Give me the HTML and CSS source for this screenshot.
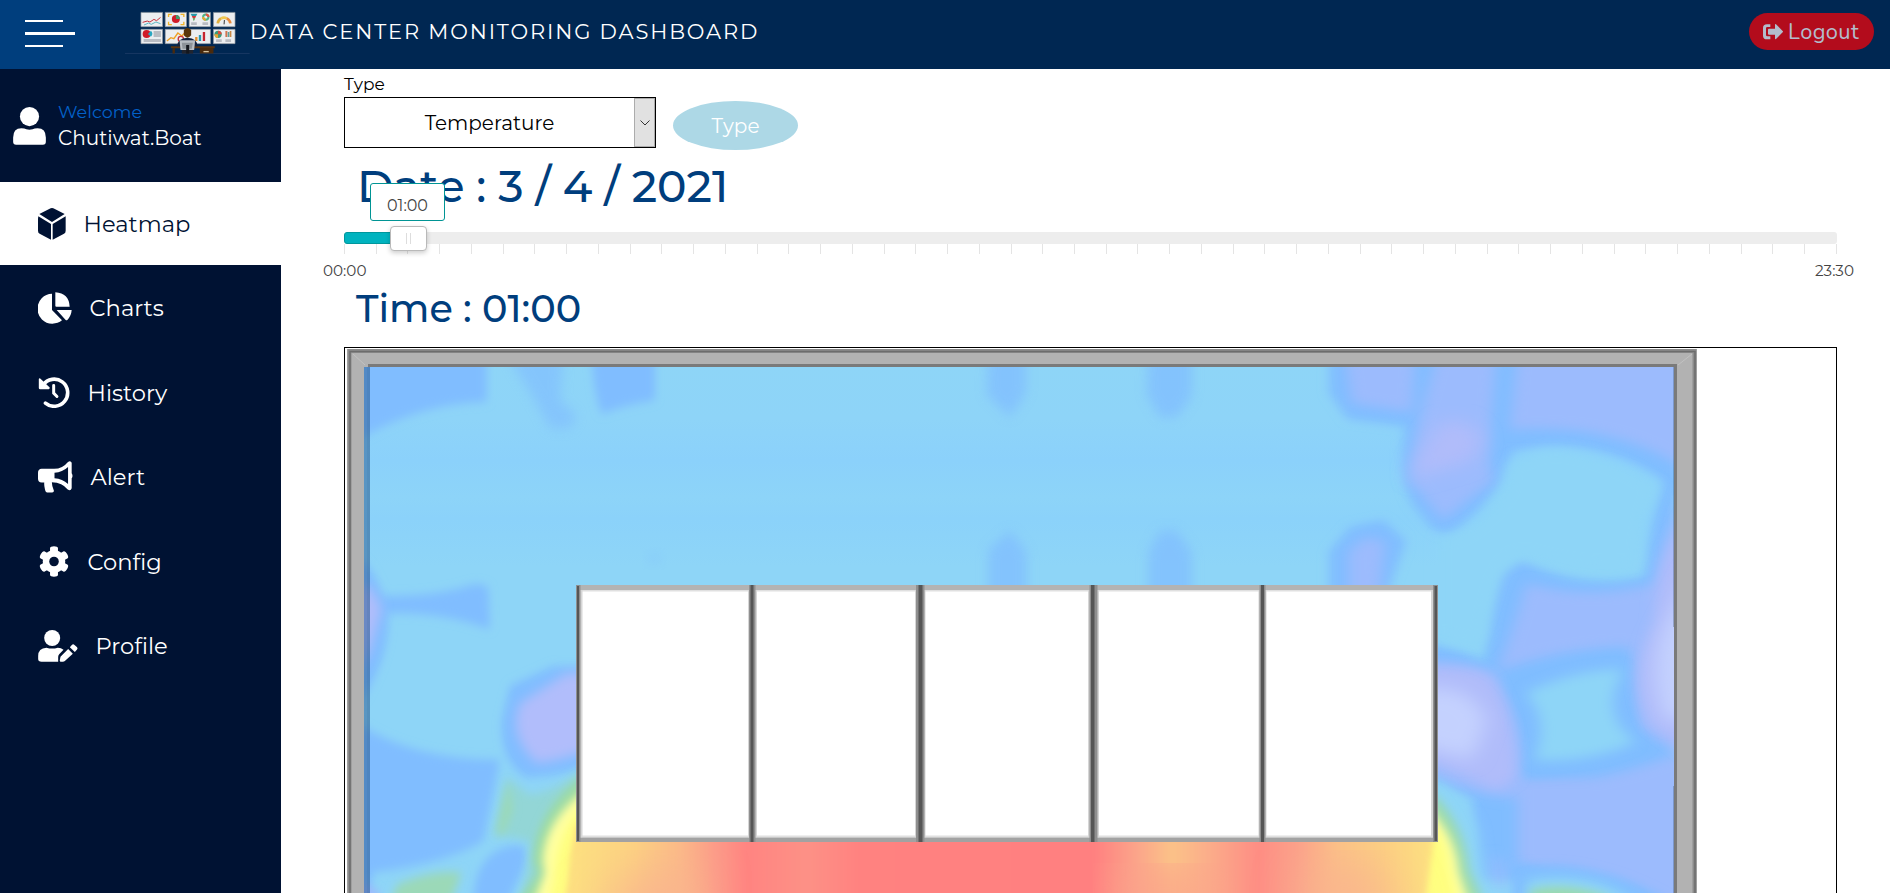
FILE: index.html
```html
<!DOCTYPE html>
<html lang="en">
<head>
<meta charset="utf-8">
<title>Data Center Monitoring Dashboard</title>
<link rel="stylesheet" href="styles.css">
</head>
<body>
<header class="topbar">
  <button class="menu-btn" aria-label="Menu"><i></i><i class="long"></i><i></i></button>
  <svg class="logo" viewBox="15 36 376 132" width="125" height="44">
    <path d="M15 163.500H390" stroke="#24416b" stroke-width="2"/>
    <g fill="#eceef0" stroke="#8d949c" stroke-width="2">
      <path d="M63 40h65v43H63zM136 40h64v43h-64zM208 40h64v43h-64zM281 40h65v43h-65zM63 91h65v43H63zM136 91h136v43H136zM281 91h65v43h-65z"/>
    </g>
    <g fill="none" stroke-width="3">
      <path d="M68 70l14-4 8 3 12-8 8 4 12-10" stroke="#c8323c"/>
      <path d="M72 78l14-6 8 4 14-7 14 5" stroke="#5cb8c4"/>
      <path d="M146 54v-8h10M182 46h10v8M192 68v9h-10M156 77h-10v-9" stroke="#f0b429" stroke-width="4"/>
      <path d="M141 126l12-10 9 3 12-17 12 9 12-14" stroke="#f0a020" stroke-width="4"/>
      <path d="M294 73a20 20 0 0 1 10-15" stroke="#e0b040" stroke-width="8"/>
      <path d="M304 58a20 20 0 0 1 17 0" stroke="#f0c850" stroke-width="8"/>
      <path d="M321 58a20 20 0 0 1 11 15" stroke="#e88a3c" stroke-width="8"/>
      <path d="M313 76l1-13" stroke="#333"/>
      <circle cx="258" cy="54" r="8" stroke="#4db388" stroke-width="6"/>
      <path d="M258 46a8 8 0 0 1 8 8" stroke="#e05040" stroke-width="6"/>
      <path d="M250 54a8 8 0 0 0 8 8" stroke="#e9a52c" stroke-width="6"/>
      <circle cx="183" cy="120" r="8" stroke="#c8323c" stroke-width="4"/>
    </g>
    <circle cx="168" cy="60" r="12" fill="#d01c28"/><path d="M168 60V48a12 12 0 0 1 12 12z" fill="#3f9e6c"/>
    <path d="M212 44h21l-4 7h-13z" fill="#2799a8"/><path d="M216 51h13l-3 7h-7z" fill="#d23a3a"/><path d="M219 58h7l-4 9z" fill="#4a9c48"/>
    <path d="M214 70h17v8h-17zM248 70h17v8h-17zM101 96h22v18h-22zM71 120h52v9H71zM289 121h17v8h-17zM317 121h17v8h-17z" fill="#b9bcc2"/>
    <circle cx="80" cy="105" r="12" fill="#d01c28"/><path d="M84 105l9-10a13 13 0 0 1 0 18z" fill="#2aa7c0"/>
    <path d="M226 114h7v12h-7z" fill="#e08c2c"/><path d="M237 108h7v18h-7z" fill="#2c9bb0"/><path d="M249 99h7v27h-7z" fill="#c5252f"/>
    <circle cx="295" cy="106" r="11" fill="#3d9a78"/><path d="M295 106V95a11 11 0 0 1 11 11z" fill="#e04a3a"/><path d="M295 106h-11a11 11 0 0 0 11 11z" fill="#eaa52c"/>
    <path d="M317 96h6v18h-6z" fill="#d27550"/><path d="M324 99h5v15h-5z" fill="#57a3a3"/><path d="M330 96h5v18h-5z" fill="#c98a48"/>
    <path d="M153 142h132v6H153z" fill="#5b3510"/><path d="M158 148h7v16h-7zM240 146h41v18h-41z" fill="#4a2a0c"/>
    <path d="M251 156h16v4h-16z" fill="#d4c3a0"/>
    <path d="M172 142q0-24 31-26 30 2 30 26z" fill="#14223c"/><path d="M186 148h34v16h-34z" fill="#20242e"/>
    <path d="M192 93q10-12 22 0v16q-11 14-22 0z" fill="#5a3508"/>
    <path d="M179 124h47l-3 29h-41z" fill="#b9bec4"/><path d="M186 131h33l-3 18h-28z" fill="#8d9399"/><path d="M199 138h9v26h-9z" fill="#14171d"/>
  </svg>
  <h1 class="title">DATA CENTER MONITORING DASHBOARD</h1>
  <a class="logout">
    <svg viewBox="0 0 60 48" width="20" height="16" fill="currentColor"><path d="M22 1v8H13q-4 0-4 4v20q0 4 4 4h9v9H12Q0 46 0 35V12Q0 1 12 1z"/><path d="M36 3q0-4 3-2l20 20q2 2 0 4L39 45q-3 2-3-2V32H18q-3 0-3-3V17q0-3 3-3h18z"/></svg>
    <span>Logout</span>
  </a>
</header>
<div class="shell">
  <aside class="sidebar">
    <section class="user">
      <svg viewBox="39 320 99 115" width="33" height="38" fill="#fff"><circle cx="88.500" cy="349" r="29"/><path d="M39 412q0-28 25-28 10 0 15 3 9 3 19 0 5-3 15-3 25 0 25 28v13q0 9-9 9H48q-9 0-9-9z"/></svg>
      <div><p class="welcome">Welcome</p><p class="name">Chutiwat.Boat</p></div>
    </section>
    <nav class="nav">
      <a class="item active">
        <svg viewBox="113 620 84 96" width="28" height="32" fill="#001233"><path d="M155 620q4 0 7 2l31 16-38 24-38-24 31-16q3-2 7-2zM114 645l38 23v47l-34-18q-5-2-5-9v-36zM196 645v43q0 7-5 9l-34 18v-47z"/></svg>
        <span>Heatmap</span></a>
      <a class="item">
        <svg viewBox="113 92 102 96" width="34" height="32" fill="#fff"><path d="M155 97v49l30 31q-12 10-29 10a44 45 0 0 1-1-90z"/><path d="M165 93q41 3 43 43h-40q-3 0-3-3zM169 146h45q-1 17-13 30-3 2-5 0z"/></svg>
        <span>Charts</span></a>
      <a class="item">
        <svg viewBox="113 348 96 94" width="32" height="31" fill="none" stroke="#fff"><path d="M128 372a41 41 0 1 1 7 55" stroke-width="11" stroke-linecap="round"/><path d="M115 354q1-4 5-1l28 27q1 4-3 5h-26q-4 0-4-4z" fill="#fff" stroke="none"/><path d="M160 374v23l10 10" stroke-width="9" stroke-linecap="round"/></svg>
        <span>History</span></a>
      <a class="item">
        <svg viewBox="113 602 106 96" width="35" height="32" fill="#fff"><path fill-rule="evenodd" d="M124 625h38q25 0 41-20 9-6 12 2v32q5 8 0 15v30q-3 10-12 4-16-21-48-22 0 12 6 25 1 5-5 6h-15q-5 0-7-10-3-12-2-20h-8q-11-1-11-12v-18q0-11 11-12zM163 637v17q24 2 41 17v-51q-17 16-41 17z"/></svg>
        <span>Alert</span></a>
      <a class="item">
        <svg viewBox="113 855 96 94" width="32" height="31" fill="#fff"><g id="teeth"><path id="tooth" d="M149 875v-14q1-5 12-5t12 5v14zM149 929v14q1 5 12 5t12-5v-14z"/><use href="#tooth" transform="rotate(60 161 902)"/><use href="#tooth" transform="rotate(120 161 902)"/></g><circle cx="161" cy="902" r="34"/><circle cx="161" cy="902" r="14.500" fill="#001233"/></svg>
        <span>Config</span></a>
      <a class="item">
        <svg viewBox="113 1109 119 96" width="40" height="32" fill="#fff"><circle cx="155" cy="1133" r="24"/><path d="M113 1187q0-24 25-25 17 5 34 0 10 0 17 6l-13 14q-3 3-3 8v14h-50q-10 0-10-8zM180 1189l23-23 14 14-24 22q-2 2-6 2h-7q-3-1-2-5zM208 1161l6-7q4-4 8 0l7 6q4 4 0 8l-6 7z"/></svg>
        <span>Profile</span></a>
    </nav>
  </aside>
  <main class="main">
    <label class="type-label">Type</label>
    <div class="controls">
      <div class="select"><span class="value">Temperature</span><span class="arrow"><svg viewBox="0 0 10 6" width="10" height="6" fill="none" stroke="#333"><path d="M.5.500L5 5 9.500.500"/></svg></span></div>
      <button class="type-btn">Type</button>
    </div>
    <h2 class="date">Date : 3 / 4 / 2021</h2>
    <div class="slider">
      <div class="track"><div class="fill"></div><div class="handle"></div><div class="tip">01:00</div></div>
      <div class="ticks"></div>
      <div class="range"><span>00:00</span><span>23:30</span></div>
    </div>
    <h2 class="time">Time : 01:00</h2>
    <div class="map">
      <svg viewBox="345 348 1491 545" width="1491" height="545">
        <defs>
          <filter id="b3" x="-30%" y="-30%" width="160%" height="160%"><feGaussianBlur stdDeviation="3"/></filter>
          <filter id="b6" x="-30%" y="-30%" width="160%" height="160%"><feGaussianBlur stdDeviation="13"/></filter>
          <filter id="soft" x="-30%" y="-30%" width="160%" height="160%"><feGaussianBlur stdDeviation="17"/></filter>
          <filter id="b12" x="-30%" y="-30%" width="160%" height="160%"><feGaussianBlur stdDeviation="24"/></filter>
          <linearGradient id="base" x1="0" y1="0" x2="0" y2="1"><stop offset="0" stop-color="#8ed5f7"/><stop offset=".1" stop-color="#8ed4f8"/><stop offset=".18" stop-color="#8bd1fb"/><stop offset=".25" stop-color="#8dd4f8"/><stop offset=".29" stop-color="#8bd2fa"/><stop offset=".38" stop-color="#8ed5f7"/><stop offset="1" stop-color="#8ed5f7"/></linearGradient>
          <linearGradient id="hot" gradientUnits="userSpaceOnUse" x1="573" y1="0" x2="1441" y2="0">
            <stop offset="0" stop-color="#fde080"/><stop offset=".07" stop-color="#fcd182"/><stop offset=".125" stop-color="#fbb888"/><stop offset=".165" stop-color="#fc9a88"/><stop offset=".2" stop-color="#ff8481"/><stop offset=".27" stop-color="#fd9186"/><stop offset=".33" stop-color="#ff8280"/><stop offset=".6" stop-color="#ff8080"/><stop offset=".65" stop-color="#fba58a"/><stop offset=".69" stop-color="#fbc288"/><stop offset=".73" stop-color="#fbae8a"/><stop offset=".79" stop-color="#fe8d84"/><stop offset=".84" stop-color="#fba48a"/><stop offset=".88" stop-color="#fbc087"/><stop offset=".94" stop-color="#fcd082"/><stop offset="1" stop-color="#fde480"/>
          </linearGradient>
          <clipPath id="room"><path d="M364 366H1676V893H364z"/></clipPath>
        </defs>
        <path fill="#fff" d="M345 348h1491v545H345z"/>
        <g clip-path="url(#room)">
          <path fill="url(#base)" d="M364 366h1312v527H364z"/>
          <!-- left side -->
          <g transform="translate(340 340) scale(.33333 .35273)">
            <g fill="#80bdff" filter="url(#b6)">
              <path d="M60 40H440V175Q240 180 60 280zM755 40H945V170Q850 185 785 210 760 150 755 40z"/>
              <path d="M60 620Q95 640 130 725 280 730 410 690L445 700 450 820Q300 770 145 775 150 900 60 1030z"/>
              <path d="M60 1090Q220 1190 480 1190L430 1420Q330 1480 100 1510L60 1700z"/>
              <path d="M400 1600Q400 1440 540 1430 570 1440 550 1500L500 1600z"/>
              <path d="M510 980L640 925H760V1200Q660 1240 560 1240 480 1200 485 1080z"/>
            </g>
            <path fill="#80bdff" opacity=".65" filter="url(#soft)" d="M500 40H670L660 170 710 215 690 250 630 250 590 180z"/>
            <path fill="#80bdff" opacity=".18" filter="url(#b6)" d="M920 600h45v40h-45z"/>
            <g fill="#b1bdfb" filter="url(#soft)"><path d="M50 690L90 700 125 760 90 880 50 950z"/><path d="M540 1030L680 945H800V1140Q690 1190 590 1200 500 1120 540 1030z"/></g>
            <path fill="#9fb9fc" filter="url(#b6)" d="M60 1530l60 40v60H60z"/>
            <path fill="#93d6d6" filter="url(#b6)" d="M500 1240L570 1290Q650 1280 730 1215V1650H500Q570 1560 570 1420 490 1400 460 1410z"/>
            <path fill="#9bd9b8" filter="url(#b6)" d="M503 1250L520 1330 490 1400 470 1400zM170 1545Q280 1500 365 1510L330 1600H150z"/>
            <path fill="#9bdaa4" filter="url(#b6)" d="M740 1230Q585 1330 580 1480L595 1510 530 1600H780z"/>
            <path fill="#ffffa0" filter="url(#b6)" d="M750 1265Q610 1360 608 1480L615 1510 570 1620H780z"/>
            <path fill="#ffff80" filter="url(#b6)" d="M750 1300Q645 1390 642 1530L620 1620H780z"/>
            <path fill="#fcd980" filter="url(#b6)" d="M760 1340Q690 1400 690 1530L670 1620H800z"/>
          </g>
          <!-- right side -->
          <g transform="translate(1240 340) scale(.41463 .35273)">
            <g fill="#80bdff" filter="url(#b6)">
              <path d="M215 40H660V300Q650 420 520 540 480 570 440 500 370 420 400 245L260 225 215 150z"/>
              <path d="M215 720V600L265 530 345 510 400 570 355 720z"/>
              <path d="M1050 300V1700H670V1530H560V1300L450 1240V860Q540 880 590 910 600 780 625 660L680 625Q830 710 975 670 980 520 1050 300z"/>
              <path d="M600 40H1060V440Q900 260 640 320z"/>
            </g>
            <g fill="#9cbbfd" filter="url(#soft)">
              <path d="M250 20H425L415 205 270 180zM480 20L620 20 600 330 610 400 490 510 410 400 430 230z"/>
              <path d="M670 20H1080V370Q900 230 650 255zM262 740V600L300 560 350 570 335 740z"/>
              <path d="M1080 400Q1010 600 1000 690 850 740 690 690 665 800 620 940 780 870 940 870L960 1100 1080 1190V1720L670 1480 670 1260Q880 1260 1080 1160z"/>
              <path d="M670 1240H1090V1560Q880 1450 670 1480z"/>
              <path d="M430 910Q580 915 620 955 675 1080 680 1180L665 1300Q560 1290 430 1220z"/>
              <path d="M600 1460l50 20v80l-50-10z" opacity=".5"/>
            </g>
            <g fill="#80bdff" filter="url(#b6)"><path d="M640 975Q800 890 940 900 920 1050 985 1150 850 1230 690 1240 710 1080 640 975z"/><path d="M660 1495Q850 1460 1050 1600H660z"/></g>
            <g fill="#8ed5f7" filter="url(#soft)"><path d="M645 350Q720 305 770 310 900 325 1010 415 965 520 970 640 830 660 690 610 620 610 590 850L570 870 480 840V560Q560 560 640 420z"/><path d="M690 1000Q820 930 925 935 860 1060 955 1140 840 1200 710 1190 750 1080 690 1000zM690 1530Q860 1500 960 1600H690z"/><path d="M460 1240Q530 1290 570 1380L600 1600H460z"/></g>
            <g fill="#b0bcfa" filter="url(#b12)"><path d="M480 235Q570 215 585 290L555 345 410 395 425 340z"/></g>
            <g fill="#b0bcfa" filter="url(#soft)"><path d="M1090 480Q1000 620 1000 800 930 960 990 1090L1090 1180zM430 930Q590 925 610 965 665 1080 665 1240L620 1275 430 1180z"/></g>
            <path fill="#c4d1fe" filter="url(#b12)" d="M1100 640L1020 820Q980 960 1030 1080h70zM430 990Q560 970 595 1080L560 1190 430 1150z"/>
            <path fill="#9bdaac" filter="url(#b6)" d="M700 1560q90-25 190 20v50H700zM460 1280Q540 1370 552 1500L590 1600H460z"/>
            <path fill="#ffffa0" filter="url(#b6)" d="M440 1310Q520 1400 527 1510L560 1620H430z"/>
            <path fill="#ffff80" filter="url(#b6)" d="M430 1340Q500 1400 505 1490L530 1620H430z"/>
          </g>
          <!-- top centre -->
          <g transform="translate(820 340) scale(.33333 .35273)" fill="#80bdff" opacity=".75" filter="url(#soft)">
            <path d="M505 30H618V150L570 220 500 155zM985 30H1115V160L1070 220H1020L980 155zM505 740V595L570 540 620 600V740zM985 740V600L1020 540H1070L1115 600V740z"/>
          </g>
          <!-- hot aisle -->
          <path fill="url(#hot)" filter="url(#b3)" d="M576 825h860l-12 85H568z"/>
          <path fill="#f9b28f" filter="url(#b12)" d="M590 915l50-40h60l-10 60zM1300 915l10-45h60l35 45z"/>
          <path fill="#fba08a" filter="url(#b12)" d="M1120 875h90v40h-90z"/>
          <path fill="#1a4a80" opacity=".45" d="M364 366h3v527h-3z"/>
          <path fill="#1a4a80" opacity=".5" d="M367 366h3v527h-3z"/>
          <path fill="#345" opacity=".3" d="M1673 367h3v260h-3zM1673 786h3v107h-3z"/>
        </g>
        <!-- room walls -->
        <path fill="#b2b2b2" d="M347 349H1697V893H1676V367H364V893H347z"/>
        <path fill="none" stroke="#8c8c8c" stroke-width="4" d="M349.500 893V351H1694.500V893"/>
        <path fill="none" stroke="#6c6c6c" stroke-width="1.500" d="M350 893V351.500H1695V893"/>
        <path fill="none" stroke="#7a7a7a" stroke-width="3" d="M368 365.500H1675.500V893"/>
        <path fill="none" stroke="#c2c2c2" d="M353 354l12 11M1692 354l-14 11"/>
        <!-- racks -->
        <path fill="#fff" d="M577 586h860v255H577z"/>
        <path fill="#b3b3b3" d="M576 585h862v5H576z"/><path fill="#e0e0e0" d="M582 590h850v1.500H582zM578 835.500h858v2H578z"/><path fill="#a2a2a2" d="M576 837.500h862v4.500H576z"/>
        <g fill="#d6d6d6"><path d="M580 590h2.500v247H580zM748 590h9v247h-9zM915 590h10.500v247H915zM1088 590h11v247h-11zM1258.500 590h8v247h-8zM1431 590h3v247h-3z"/></g>
        <g fill="#8f8f8f"><path d="M576 585h4.500v257H576zM749 585h6.500v257H749zM916 585h8.500v257H916zM1089.500 585h8v257h-8zM1259.500 585h6v257h-6zM1433 585h5v257h-5z"/></g>
        <g fill="#565656"><path d="M577 586h2v255h-2zM750.500 585h3v257h-3zM918.500 585h4v257h-4zM1091 585h3.500v257h-3.500zM1261 585h3v257h-3zM1434.500 586h2.500v255h-2.500z"/></g>
      </svg>
    </div>
  </main>
</div>
</body>
</html>
```
FILE: styles.css
```css
* { box-sizing: border-box; margin: 0; padding: 0; }
body { width: 1890px; height: 893px; overflow: hidden; background: #fff; font-family: Montserrat, Inter, "Open Sans", sans-serif; color: #000; }
button { border: 0; font: inherit; }
.topbar { height: 69px; background: #002752; display: flex; align-items: center; padding-right: 16px; }
.menu-btn { width: 100px; height: 69px; background: #003e7d; display: flex; flex-direction: column; justify-content: space-between; padding: 20px 25px 22px; }
.menu-btn i { display: block; width: 38px; height: 2px; background: #fff; }
.menu-btn .long { width: 50px; height: 3px; }
.logo { margin: -3px 0 0 25px; }
.title { margin: -7px 0 0 0; font-size: 21px; font-weight: 400; letter-spacing: 1.850px; color: #fff; white-space: nowrap; }
.logout { margin: -6px 0 0 auto; width: 125px; height: 37px; border-radius: 19px; background: #b30c1c; color: #b3bccb; display: flex; align-items: center; padding-left: 14px; gap: 5px; font: 21.800px Nunito, "Open Sans", sans-serif; letter-spacing: .4px; }
.shell { display: flex; height: 824px; }
.sidebar { width: 281px; background: #001233; color: #fff; }
.user { height: 113px; display: flex; align-items: center; padding-left: 13px; gap: 12px; }
.welcome { color: #0360c8; font-size: 17.600px; line-height: 24px; }
.name { font-size: 20px; line-height: 28px; }
.user p { white-space: nowrap; }
.nav { display: flex; flex-direction: column; gap: 1.600px; }
.item { height: 83px; display: flex; align-items: center; gap: 17.600px; padding-left: 38px; font-size: 22.600px; }
.item.active { background: #fff; color: #001233; }
.main { flex: 1; padding: 3px 53px 0 63px; }
.type-label { display: block; font-size: 17px; line-height: 25px; }
.controls { display: flex; gap: 17px; }
.select { width: 312px; height: 51px; border: 1px solid #000; display: flex; font-size: 20px; }
.value { flex: 1; display: flex; align-items: center; justify-content: center; }
.arrow { width: 21px; background: #e1e1e1; border: 1px solid #acacac; display: flex; align-items: center; justify-content: center; }
.type-btn { width: 125px; height: 49px; margin-top: 4px; border-radius: 50%; background: #add8e6; color: #fff; font-size: 20px; }
.date { margin: 10px 0 0 13px; font-size: 44.200px; line-height: 52px; font-weight: 500; color: #003e7d; white-space: nowrap; }
.slider { padding-top: 20px; }
.track { position: relative; height: 12px; background: #ededed; border-radius: 3px; }
.fill { width: 64px; height: 12px; background: #00b3bf; border: 1px solid #00979c; border-radius: 3px; }
.handle { position: absolute; left: 46px; top: -6px; width: 37px; height: 25px; border: 1px solid #b9b9b9; border-radius: 4px; background: linear-gradient(90deg, transparent 15px, #ddd 15px 16px, transparent 16px 19px, #ddd 19px 20px, transparent 20px) center / 100% 11px no-repeat #fff; box-shadow: 0 2px 5px rgba(0,0,0,.2); }
.tip { position: absolute; left: 26px; top: -49px; width: 75px; height: 38px; padding-top: 4px; border: 1px solid #009494; border-radius: 3px; background: #fff; color: #444; font-size: 16px; line-height: 36px; text-align: center; }
.ticks { height: 10px; background: repeating-linear-gradient(90deg, #e4e4e4 0 1px, transparent 1px 31.740px); }
.range { display: flex; justify-content: space-between; margin: 7px -17px 0 -21px; font-size: 15.200px; line-height: 20px; color: #444; }
.time { margin: 2px 0 0 12px; font-size: 38.200px; line-height: 51px; font-weight: 500; color: #003e7d; }
.map { margin-top: 13px; height: 560px; border: 1px solid #000; overflow: hidden; }
.map svg { display: block; }
```
